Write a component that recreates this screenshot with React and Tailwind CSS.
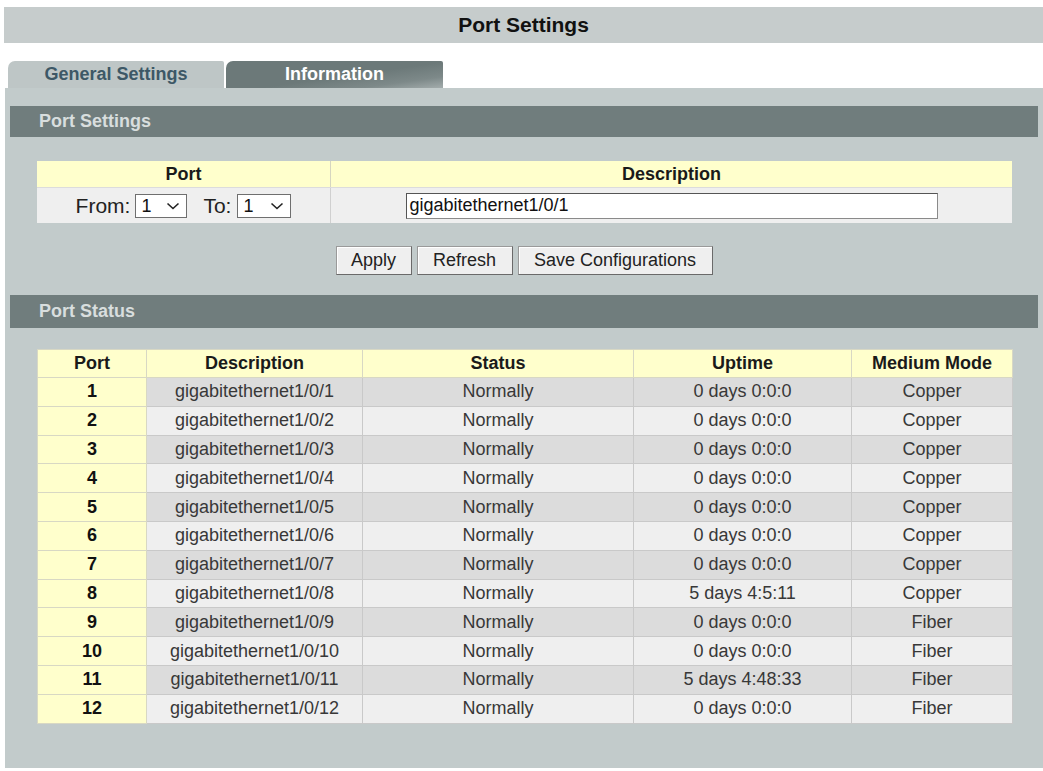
import React from "react";

const rows = [
  [1, "gigabitethernet1/0/1", "0 days 0:0:0", "Copper"],
  [2, "gigabitethernet1/0/2", "0 days 0:0:0", "Copper"],
  [3, "gigabitethernet1/0/3", "0 days 0:0:0", "Copper"],
  [4, "gigabitethernet1/0/4", "0 days 0:0:0", "Copper"],
  [5, "gigabitethernet1/0/5", "0 days 0:0:0", "Copper"],
  [6, "gigabitethernet1/0/6", "0 days 0:0:0", "Copper"],
  [7, "gigabitethernet1/0/7", "0 days 0:0:0", "Copper"],
  [8, "gigabitethernet1/0/8", "5 days 4:5:11", "Copper"],
  [9, "gigabitethernet1/0/9", "0 days 0:0:0", "Fiber"],
  [10, "gigabitethernet1/0/10", "0 days 0:0:0", "Fiber"],
  [11, "gigabitethernet1/0/11", "5 days 4:48:33", "Fiber"],
  [12, "gigabitethernet1/0/12", "0 days 0:0:0", "Fiber"],
];

function Chevron() {
  return (
    <svg width="14" height="10" viewBox="0 0 14 10" className="block">
      <path d="M1.5 2.5 L7 7.5 L12.5 2.5" fill="none" stroke="#222" strokeWidth="1.6" />
    </svg>
  );
}

function FakeSelect({ w }) {
  return (
    <div className={`${w} h-[24px] bg-white border border-[#6f6f6f] flex items-center justify-between pl-[5px] pr-[6px] text-[18px] leading-none text-[#111]`}>
      <span>1</span>
      <Chevron />
    </div>
  );
}

function Button({ children, w }) {
  return (
    <div className={`${w} h-[29px] flex items-center justify-center bg-[#efefef] border border-[#6a6a6a] border-t-[#9a9a9a] border-l-[#9a9a9a] shadow-[inset_1px_1px_0_#ffffff] text-[18px] text-[#222]`}>
      {children}
    </div>
  );
}

export default function App() {
  return (
    <div className="w-[1043px] h-[771px] bg-white font-['Liberation_Sans',Arial,sans-serif] pt-[7px] pl-[4px] overflow-hidden">
      {/* Title bar */}
      <div className="h-[36px] bg-[#c6cccc] flex items-center justify-center text-[21px] font-bold text-[#111]">
        Port Settings
      </div>

      {/* Tabs */}
      <div className="mt-[18px] h-[27px] flex ml-[4px] gap-[2px]">
        <div className="w-[216px] h-full rounded-tl-[7px] rounded-tr-[2px] bg-[#bec6c6] flex items-center justify-center text-[18px] font-bold text-[#3d5866]">
          General Settings
        </div>
        <div className="w-[217px] h-full rounded-tl-[7px] rounded-tr-[2px] bg-[linear-gradient(172deg,#6c7979_55%,#7d8989_80%,#a3acac_100%)] flex items-center justify-center text-[18px] font-bold text-white">
          Information
        </div>
      </div>

      {/* Panel */}
      <div className="ml-[1px] h-[680px] bg-[#c2cbcb] pt-[18px] px-[5px]">
        <div className="h-[31px] bg-[#707d7d] flex items-center pl-[29px] text-[18px] font-bold text-[#d8dede]">
          Port Settings
        </div>

        {/* Port settings form table */}
        <div className="mt-[24px] ml-[27px] mr-[26px]">
          <div className="flex h-[26px] bg-[#ffffcc] text-[18px] font-bold text-[#1a1a1a]">
            <div className="w-[294px] flex items-center justify-center border-r border-[#d6d6c0]">Port</div>
            <div className="flex-1 flex items-center justify-center">Description</div>
          </div>
          <div className="flex h-[36px] bg-[#efefef] border-t border-[#dcdcdc]">
            <div className="w-[294px] flex items-center justify-center border-r border-[#d0d0d0] text-[21px] text-[#222]">
              <span className="mr-[5px]">From:</span>
              <FakeSelect w="w-[52px]" />
              <span className="ml-[16px] mr-[6px]">To:</span>
              <FakeSelect w="w-[54px]" />
            </div>
            <div className="flex-1 flex items-center justify-center">
              <div className="w-[532px] h-[26px] bg-white border border-[#8a8a8a] border-t-[#555] border-l-[#555] flex items-center pl-[3px] text-[18px] text-[#111]">
                gigabitethernet1/0/1
              </div>
            </div>
          </div>
        </div>

        {/* Buttons */}
        <div className="mt-[23px] flex justify-center gap-[5px]">
          <Button w="w-[76px]">Apply</Button>
          <Button w="w-[96px]">Refresh</Button>
          <Button w="w-[195px]">Save Configurations</Button>
        </div>

        <div className="mt-[20px] h-[33px] bg-[#707d7d] flex items-center pl-[29px] text-[18px] font-bold text-[#d8dede]">
          Port Status
        </div>

        {/* Port status table */}
        <div className="mt-[21px] ml-[27px]">
          <table className="table-fixed border-collapse w-[975px] text-[18px]">
            <colgroup>
              <col className="w-[109px]" />
              <col className="w-[216px]" />
              <col className="w-[271px]" />
              <col className="w-[218px]" />
              <col className="w-[161px]" />
            </colgroup>
            <thead>
              <tr className="h-[28px] bg-[#ffffcc] font-bold text-[#1a1a1a]">
                <th className="border border-[#d8d8c4] font-bold">Port</th>
                <th className="border border-[#d8d8c4] font-bold">Description</th>
                <th className="border border-[#d8d8c4] font-bold">Status</th>
                <th className="border border-[#d8d8c4] font-bold">Uptime</th>
                <th className="border border-[#d8d8c4] font-bold">Medium Mode</th>
              </tr>
            </thead>
            <tbody>
              {rows.map(([p, d, u, m], i) => {
                const bg = i % 2 === 0 ? "bg-[#dcdcdc]" : "bg-[#efefef]";
                return (
                  <tr key={p} className="h-[28.8px] text-center text-[#383838]">
                    <td className="bg-[#ffffcc] border border-[#d8d8c4] font-bold text-[#111]">{p}</td>
                    <td className={`${bg} border border-[#c9c9c9]`}>{d}</td>
                    <td className={`${bg} border border-[#c9c9c9]`}>Normally</td>
                    <td className={`${bg} border border-[#c9c9c9]`}>{u}</td>
                    <td className={`${bg} border border-[#c9c9c9]`}>{m}</td>
                  </tr>
                );
              })}
            </tbody>
          </table>
        </div>
      </div>
    </div>
  );
}
